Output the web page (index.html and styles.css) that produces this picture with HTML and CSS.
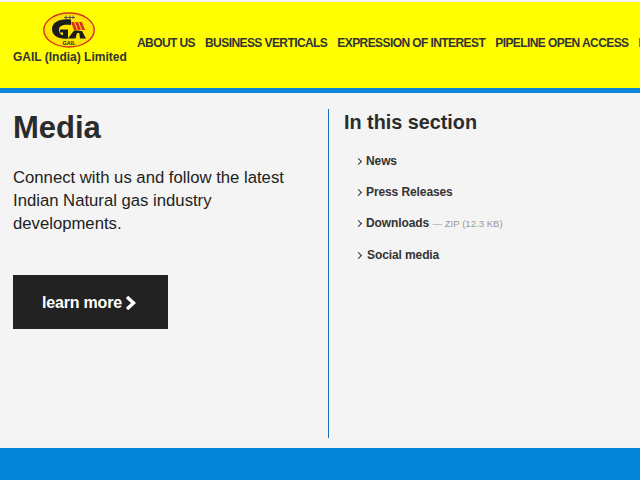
FILE: index.html
```html
<!DOCTYPE html>
<html lang="en">
<head>
<meta charset="utf-8">
<title>Media</title>
<link rel="stylesheet" href="styles.css">
</head>
<body>
<header class="site-header">
  <a class="brand" href="#">
    <svg class="logo" width="54" height="36" viewBox="0 0 54 36" aria-hidden="true">
      <ellipse cx="27" cy="18" rx="25.200" ry="17" fill="#ffe600" stroke="#d8321f" stroke-width="1.400"/>
      <path d="M29 7.500 C18 6 10 10 10 17 C10 24 17 27.500 26 26.500 L26 17.500 L18 17.500 L18 20.500 L21 20.500 L21 23 C18.500 23 17 20.500 17 17.500 C17 13.500 22 12 29 13 Z" fill="#1c1c1c"/>
      <path d="M26 26.500 L32 18.500 L37 18.500 L38.500 21 L35 21 L33.500 26.500 Z M37 19 L40 19 L44 26.500 L38 26.500 Z" fill="#1c1c1c"/>
      <path d="M29 10 L32 10 L35 18 L32 18 Z M33 10 L36 10 L39 18 L36 18 Z M37 10 L40 10 L43 18 L40 18 Z" fill="#d8321f"/>
      <path d="M22 5.500 H33 M24 3.500 V7 M28 3.500 V7 M31 3.500 V7" stroke="#555" stroke-width="1" fill="none"/>
      <text class="logo-text" x="27" y="32.500" text-anchor="middle">GAIL</text>
    </svg>
    <span class="brand-name">GAIL (India) Limited</span>
  </a>
  <nav class="main-nav">
    <a href="#">ABOUT US</a>
    <a href="#">BUSINESS VERTICALS</a>
    <a href="#">EXPRESSION OF INTEREST</a>
    <a href="#">PIPELINE OPEN ACCESS</a>
    <a href="#">INVESTORS</a>
  </nav>
</header>
<main class="content">
  <section class="intro">
    <h1>Media</h1>
    <p>Connect with us and follow the latest Indian Natural gas industry developments.</p>
    <a class="button" href="#">learn more
      <svg class="chev" width="11" height="14" viewBox="0 0 11 14" aria-hidden="true"><path d="M2 1 L8.500 7 L2 13" fill="none" stroke="#fff" stroke-width="3.400"/></svg>
    </a>
  </section>
  <aside class="section-nav">
    <h2>In this section</h2>
    <ul>
      <li><a href="#">News</a></li>
      <li><a href="#">Press Releases</a></li>
      <li><a href="#">Downloads</a> <span class="meta">— ZIP (12.3 KB)</span></li>
      <li class="social"><a href="#">Social media</a></li>
    </ul>
  </aside>
</main>
<footer class="site-footer"></footer>
</body>
</html>
```
FILE: styles.css
```css
* { box-sizing: border-box; }
html, body { margin: 0; height: 480px; overflow: hidden; }
body {
  display: flex;
  flex-direction: column;
  background: #f4f4f4;
  color: #222;
  font-family: "Liberation Sans", Arial, sans-serif;
}
a { color: inherit; text-decoration: none; }
.site-header {
  flex: none;
  height: 91px;
  margin-top: 2px;
  padding-left: 13px;
  display: flex;
  background: #ffff00;
  border-bottom: 5px solid #0a84d6;
  overflow: hidden;
}
.brand {
  flex: none;
  width: 124px;
  display: flex;
  flex-direction: column;
  align-items: flex-start;
  padding-top: 10px;
}
.logo { display: block; margin-left: 29px; }
.logo-text { font-family: "Liberation Sans", Arial, sans-serif; font-size: 5.500px; font-weight: bold; fill: #222; }
.brand-name {
  margin-top: 2px;
  font-size: 12px;
  line-height: 14px;
  font-weight: bold;
  color: #333;
  white-space: nowrap;
}
.main-nav {
  display: flex;
  flex: none;
  gap: 10px;
  padding-top: 33px;
  font-size: 12px;
  line-height: 16px;
  font-weight: bold;
  letter-spacing: -0.580px;
  color: #333;
  white-space: nowrap;
}
.content {
  flex: 1;
  display: flex;
  padding: 16px 0 10px 13px;
}
.intro { width: 315px; flex: none; padding-right: 30px; }
h1 {
  margin: 0;
  font-size: 31px;
  line-height: 38px;
  font-weight: bold;
  color: #2b2b2b;
}
.intro p {
  margin: 19px 0 0;
  font-size: 16.700px;
  line-height: 23px;
  color: #222;
}
.button {
  display: flex;
  align-items: center;
  justify-content: center;
  gap: 3px;
  width: 155px;
  height: 54px;
  margin-top: 40px;
  padding: 1px 3px 0 0;
  background: #222;
  color: #fff;
  font-size: 16px;
  font-weight: bold;
  letter-spacing: -0.2px;
}
.chev { display: block; }
.section-nav {
  flex: 1;
  border-left: 1px solid #1f6fb5;
  padding-left: 15px;
}
h2 {
  margin: 0;
  font-size: 19.800px;
  line-height: 26px;
  font-weight: bold;
  color: #2b2b2b;
}
ul { list-style: none; margin: 18px 0 0; padding: 0 0 0 14px; }
li {
  font-size: 12px;
  line-height: 16px;
  margin-bottom: 15px;
  font-weight: bold;
  color: #333;
}
li a { letter-spacing: -0.1px; }
li::before {
  content: "";
  display: inline-block;
  width: 4px;
  height: 4px;
  margin: 0 5px 1px -2px;
  border-top: 1.200px solid #333;
  border-right: 1.200px solid #333;
  transform: rotate(45deg);
  vertical-align: middle;
}
.social a { margin-left: 1px; }
.meta { font-size: 9.600px; font-weight: normal; color: #999; }
.site-footer { flex: none; height: 32px; background: #0484d8; }
```
